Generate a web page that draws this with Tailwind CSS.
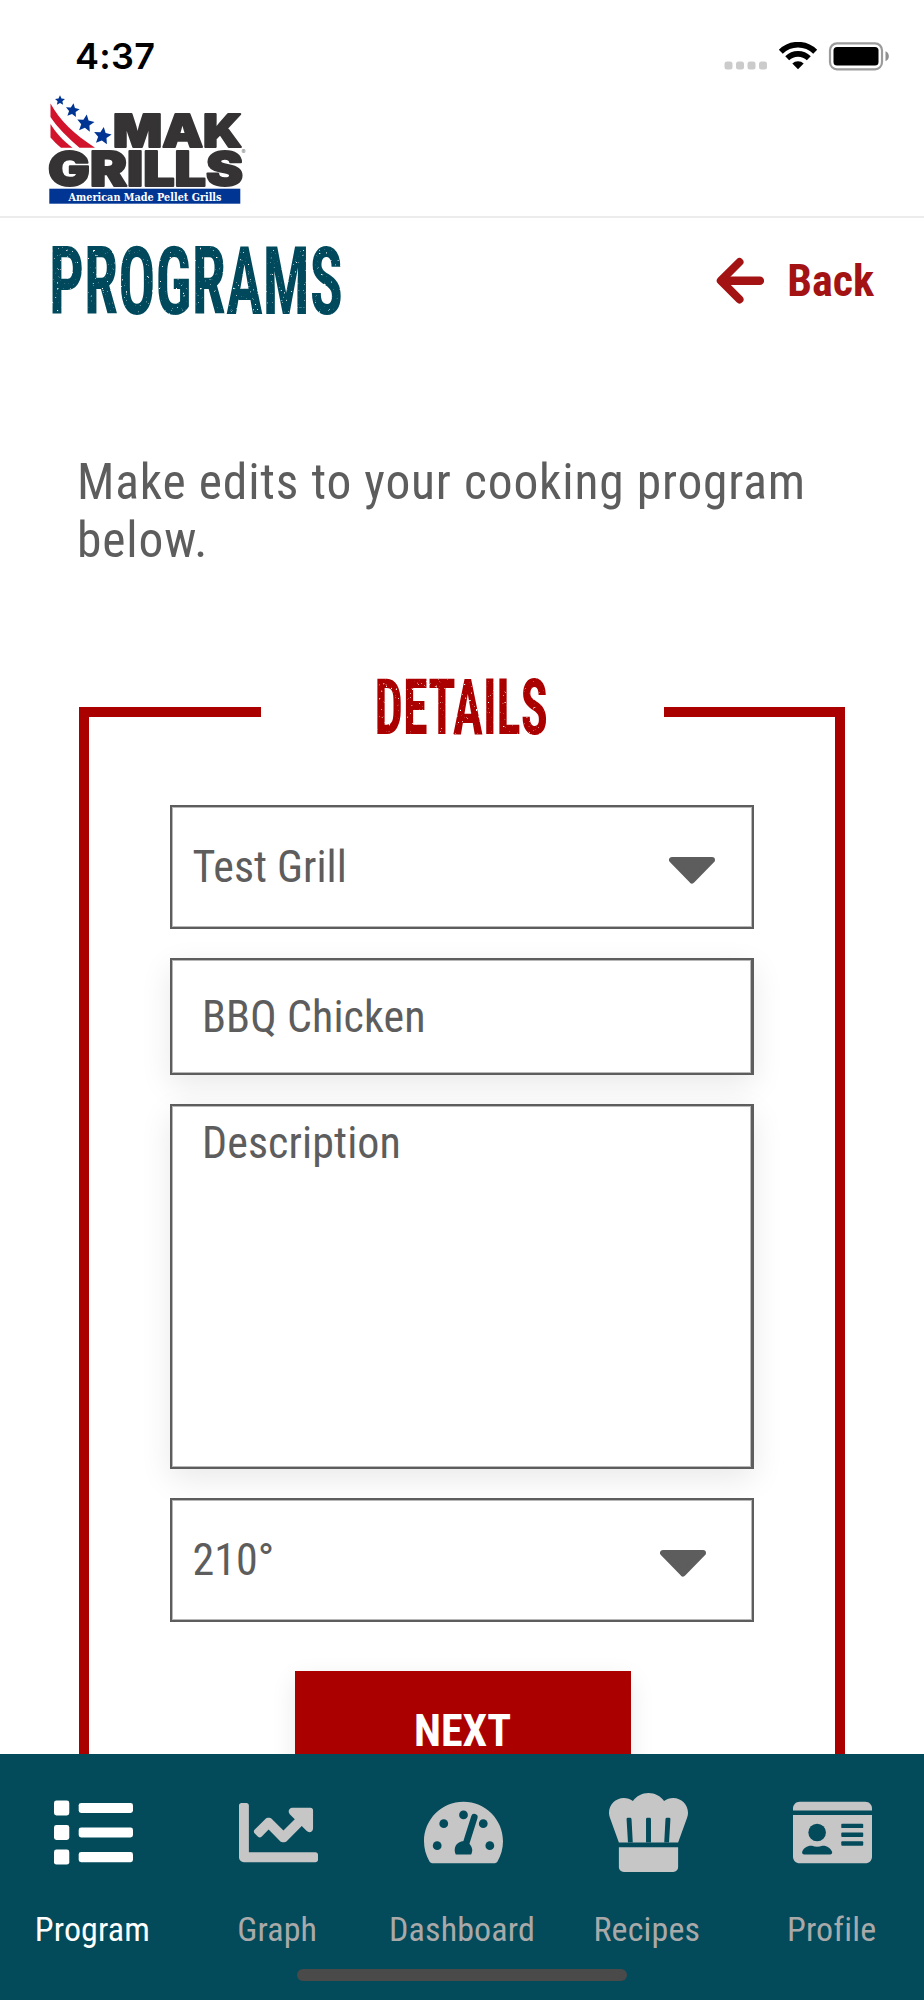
<!DOCTYPE html>
<html lang="en">
<head>
<meta charset="utf-8">
<title>MAK Grills - Programs</title>
<script src="https://cdn.jsdelivr.net/npm/@tailwindcss/browser@4"></script>
</head>
<body class="w-[924px] h-[2000px] overflow-hidden bg-white flex flex-col font-['Roboto_Condensed',Roboto,sans-serif] text-[44px] leading-[52px] text-[#5d5d5d]">

<!-- status bar and logo -->
<header class="h-[218px] shrink-0 border-b-2 border-[#ececec]">
  <div class="h-[92px] flex justify-between pl-[75px] pr-[33px] pt-[36px] text-black">
    <div class="font-['Inter',sans-serif] font-semibold text-[36px] leading-[40px] tracking-[0.300px]">4:37</div>
    <div class="flex items-start pt-[6px]">
      <svg width="44" height="30" viewBox="0 0 44 30" fill="#cbcbcb"><rect x=".5" y="19.500" width="8" height="8" rx="2.5"/><rect x="12" y="19.500" width="8" height="8" rx="2.5"/><rect x="23.500" y="19.500" width="8" height="8" rx="2.500"/><rect x="35" y="19.500" width="8" height="8" rx="2.500"/></svg>
      <svg class="ml-[10px]" width="40" height="30" viewBox="0 0 40 30"><g fill="none" stroke="#000" stroke-width="5.600"><path d="M2.800 9.700A24.500 24.500 0 0 1 37.200 9.700"/><path d="M9.200 16.300A15.500 15.500 0 0 1 30.800 16.300"/></g><path d="M20 27.300L14.300 21.600A8 8 0 0 1 25.700 21.600Z"/></svg>
      <svg class="ml-[10px]" width="63" height="30" viewBox="0 0 63 30"><rect x="2" y="1.300" width="52" height="26" rx="7" fill="none" stroke="#9b9b9b" stroke-width="2.200"/><rect x="5.500" y="5" width="45" height="18.500" rx="3.500"/><path d="M57.500 9.300C62 11 62 17.500 57.500 19.300Z" fill="#8f8f8f"/></svg>
    </div>
  </div>
  <svg class="ml-[48px] overflow-visible" width="200" height="116" viewBox="48 92 200 116">
    <defs><path id="star" d="M0 -10L2.900 -3.800L9.600 -3.100L4.600 1.500L6 8.300L0 4.900L-6 8.300L-4.600 1.500L-9.600 -3.100L-2.900 -3.800Z"/></defs>
    <g fill="#d2132c"><path d="M50.500 103.500C60 121 74 134 95 147.700H79.500C68 138 57 127 50.500 117Z"/><path d="M50.500 124C56 133 63 140.500 72.500 147.700H61C57 144.500 53.500 141 50.500 137.500Z"/></g>
    <g fill="#003594"><use href="#star" transform="translate(60 100.500) scale(.52)"/><use href="#star" transform="translate(72.500 110.500) rotate(8) scale(.72)"/><use href="#star" transform="translate(85.500 123.500) rotate(8) scale(.9)"/><use href="#star" transform="translate(102.500 136) rotate(8) scale(.92)"/>
    <rect x="49.300" y="188.700" width="191" height="15" /></g>
    <g fill="#353334" stroke="#353334" stroke-width="2" stroke-linejoin="round" font-family="Inter, sans-serif" font-weight="900">
      <text x="113" y="146.500" font-size="46" textLength="129" lengthAdjust="spacingAndGlyphs">MAK</text>
      <text x="48" y="185.800" font-size="47.500" textLength="195" lengthAdjust="spacingAndGlyphs">GRILLS</text>
    </g>
    <text x="68.500" y="200.600" font-family="DejaVu Serif, serif" font-weight="700" font-size="11.800" fill="#fff" textLength="153" lengthAdjust="spacingAndGlyphs">American Made Pellet Grills</text>
    <text x="241.500" y="154" font-family="Inter, sans-serif" font-size="6" fill="#777">®</text>
  </svg>
</header>

<!-- scrolling content -->
<main class="h-[1536px] shrink-0 overflow-hidden">
  <svg width="0" height="0" class="absolute">
    <filter id="worn" x="0" y="0" width="1" height="1">
      <feTurbulence type="fractalNoise" baseFrequency=".42" numOctaves="3" seed="7" result="fine"/>
      <feColorMatrix in="fine" type="matrix" values="0 0 0 0 0  0 0 0 0 0  0 0 0 0 0  -7 0 0 0 5.850" result="holes"/>
      <feComposite in="SourceGraphic" in2="holes" operator="in"/>
    </filter>
  </svg>
  <div class="flex justify-between pl-[48px] pr-[50px] h-[126px]">
    <svg class="overflow-visible" width="300" height="120" viewBox="48 218 300 120" role="heading">
      <text x="49" y="314" font-family="Roboto Condensed, Roboto, sans-serif" font-weight="700" font-size="94.500" fill="#034a5b" textLength="294" lengthAdjust="spacingAndGlyphs" filter="url(#worn)">PROGRAMS</text>
    </svg>
    <a class="flex items-center gap-[23px] h-[126px] text-[#a31313] font-bold">
      <svg width="48" height="48" viewBox="0 0 48 48" fill="none" stroke="#a31313" stroke-width="8" stroke-linecap="round" stroke-linejoin="round"><path d="M23.500 5L4.800 23.700L23.500 42.400"/><path d="M6 23.700H43.800" stroke-width="8.600"/></svg>
      <span>Back</span>
    </a>
  </div>

  <p class="mt-[110px] ml-[77px] w-[760px] text-[49.500px] leading-[57.500px] tracking-[0.840px]">Make edits to your cooking program below.</p>

  <section class="mt-[79px] mx-[79px]">
    <!-- frame heading sits in the gap of the top border -->
    <div class="flex items-end justify-between h-[69px]">
      <div class="w-[181.500px] h-[10px] bg-[#ab0000]"></div>
      <svg width="184" height="84" viewBox="370 663 184 84" class="-mb-[30px] overflow-visible" role="heading">
        <text x="374.500" y="733.500" font-family="Roboto Condensed, Roboto, sans-serif" font-weight="700" font-size="78.500" fill="#ab0000" textLength="173.500" lengthAdjust="spacingAndGlyphs" filter="url(#worn)">DETAILS</text>
      </svg>
      <div class="w-[181.500px] h-[10px] bg-[#ab0000]"></div>
    </div>
    <div class="border-x-[10px] border-[#ab0000] h-[1060px] pt-[88px] px-[81px] flex flex-col items-center">
      <div class="w-[584px] h-[124px] shrink-0 border-2 border-[#5d5d5d] bg-white flex items-center justify-between pl-[20.500px] pr-[37.500px] shadow-[inset_0_0_0_1px_#b8b8b8]">
        <span>Test Grill</span>
        <svg class="mt-[6px]" width="46" height="27" viewBox="0 0 46 27"><path d="M3 3H43L23 23.500Z" fill="#5d5d5d" stroke="#5d5d5d" stroke-width="6" stroke-linejoin="round"/></svg>
      </div>
      <div class="mt-[29px] w-[584px] h-[117px] shrink-0 border-2 border-r-[3px] border-[#5d5d5d] bg-white flex items-center pl-[30px] tracking-[0.100px] shadow-[inset_0_0_0_1px_#b8b8b8,0_10px_30px_rgba(0,0,0,0.09)]">BBQ Chicken</div>
      <div class="mt-[29px] w-[584px] h-[365px] shrink-0 border-2 border-r-[3px] border-[#5d5d5d] bg-white pl-[30px] pt-[11px] tracking-[0.100px] shadow-[inset_0_0_0_1px_#b8b8b8,0_10px_30px_rgba(0,0,0,0.09)]">Description</div>
      <div class="mt-[29px] w-[584px] h-[124px] shrink-0 border-2 border-[#5d5d5d] bg-white flex items-center justify-between pl-[20.500px] pr-[46.500px] relative shadow-[inset_0_0_0_1px_#b8b8b8]">
        <span>210°</span>
        <svg class="mt-[6px]" width="46" height="27" viewBox="0 0 46 27"><path d="M3 3H43L23 23.500Z" fill="#5d5d5d" stroke="#5d5d5d" stroke-width="6" stroke-linejoin="round"/></svg>
      </div>
      <button class="ml-[1px] mt-[49px] w-[336px] h-[119px] shrink-0 bg-[#ab0000] text-white font-bold shadow-[0_8px_24px_rgba(0,0,0,0.09)]">NEXT</button>
    </div>
  </section>
</main>

<!-- tab bar -->
<nav class="h-[246px] shrink-0 bg-[#034a5b] text-[#a9a9a9] text-[34px] leading-[40px] tracking-[0.150px] flex flex-col items-center justify-between pb-[19px]">
  <div class="grid grid-cols-5 w-full pt-[38.500px]">
    <div class="flex flex-col items-center gap-[37px] text-white">
      <svg class="ml-[2.500px]" width="79" height="79" viewBox="0 0 512 512" fill="#fff"><rect y="48" width="99" height="98" rx="16"/><rect y="207" width="99" height="98" rx="16"/><rect y="366" width="99" height="98" rx="16"/><rect x="160" y="64" width="352" height="66" rx="16"/><rect x="160" y="223" width="352" height="66" rx="16"/><rect x="160" y="382" width="352" height="66" rx="16"/></svg>
      <span>Program</span>
    </div>
    <div class="flex flex-col items-center gap-[37px]">
      <svg class="ml-[2.500px]" width="79" height="79" viewBox="0 0 512 512" fill="#c6c6c6"><path d="M496 384H64V80c0-8.840-7.160-16-16-16H16C7.160 64 0 71.160 0 80v336c0 17.670 14.330 32 32 32h464c8.840 0 16-7.160 16-16v-32c0-8.840-7.160-16-16-16zM464 96H345.940c-21.380 0-32.090 25.850-16.970 40.970l32.400 32.400L288 242.750l-73.370-73.370c-12.500-12.500-32.760-12.500-45.250 0l-68.690 68.690c-6.250 6.250-6.250 16.380 0 22.630l22.620 22.620c6.250 6.250 16.380 6.250 22.630 0L192 237.250l73.370 73.370c12.500 12.500 32.760 12.500 45.250 0l96-96 32.400 32.400c15.120 15.120 40.970 4.410 40.970-16.970V112c.010-8.840-7.150-16-15.990-16z"/></svg>
      <span>Graph</span>
    </div>
    <div class="flex flex-col items-center gap-[37px]">
      <svg class="ml-[2.500px]" width="79" height="79" viewBox="0 -32 576 576"><path fill="#c6c6c6" d="M288 32C128.940 32 0 160.940 0 320c0 52.800 14.250 102.260 39.060 144.800 5.610 9.620 16.300 15.200 27.440 15.200h443c11.140 0 21.830-5.580 27.440-15.200C561.750 422.260 576 372.800 576 320c0-159.060-128.940-288-288-288z"/><g fill="#034a5b"><circle cx="96" cy="352" r="32"/><circle cx="144" cy="192" r="32"/><circle cx="288" cy="128" r="32"/><circle cx="432" cy="192" r="32"/><circle cx="480" cy="352" r="32"/></g><path d="M367 144L302 340" stroke="#c6c6c6" stroke-width="88" stroke-linecap="butt"/><path d="M367 144L302 350" stroke="#034a5b" stroke-width="48" stroke-linecap="round"/><path fill="#034a5b" d="M232 416C218 390 222 350 250 332C292 303 348 332 352 384C352 396 349 407 344 416Z"/></svg>
      <span>Dashboard</span>
    </div>
    <div class="flex flex-col items-center gap-[37px]">
      <svg class="ml-[2.500px]" width="79" height="79" viewBox="0 0 512 512"><g fill="#c6c6c6"><path d="M64 320L6 160C2 149 0 138 0 128C0 75 43 33 96 33C118 33 138 40 155 52C178 20 214 0 256 0S334 20 357 52C374 40 394 33 416 33C469 33 512 75 512 128C512 138 510 149 506 160L448 320Z"/><path d="M64 352H448V480C448 498 434 512 416 512H96C78 512 64 498 64 480Z"/></g><path d="M114 170Q113 161 122 161H137Q145 161 146 170L154 320H123ZM240 170Q240 161 248 161H264Q272 161 272 170V320H240ZM398 170Q399 161 390 161H375Q367 161 366 170L358 320H389Z" fill="#034a5b"/></svg>
      <span>Recipes</span>
    </div>
    <div class="flex flex-col items-center gap-[37px]">
      <svg class="ml-[2.500px]" width="79" height="79" viewBox="0 -32 576 576"><g fill="#c6c6c6"><path d="M48 32H528C554.500 32 576 53.500 576 80V96H0V80C0 53.500 21.500 32 48 32Z"/><path d="M0 128H576V432C576 458.500 554.500 480 528 480H48C21.500 480 0 458.500 0 432Z"/></g><g fill="#034a5b"><circle cx="176" cy="256" r="64"/><path d="M131 352H139Q176 367 213 352H221C249 352 273 370 285 396C288 406 281 416 270 416H82C71 416 64 406 67 396C76 370 103 352 131 352Z"/><rect x="352" y="192" width="160" height="32" rx="7"/><rect x="352" y="256" width="160" height="32" rx="7"/><rect x="352" y="320" width="160" height="32" rx="7"/></g></svg>
      <span>Profile</span>
    </div>
  </div>
  <div class="w-[330px] h-[12.500px] rounded-full bg-[#4a4a4a]"></div>
</nav>
</body>
</html>
